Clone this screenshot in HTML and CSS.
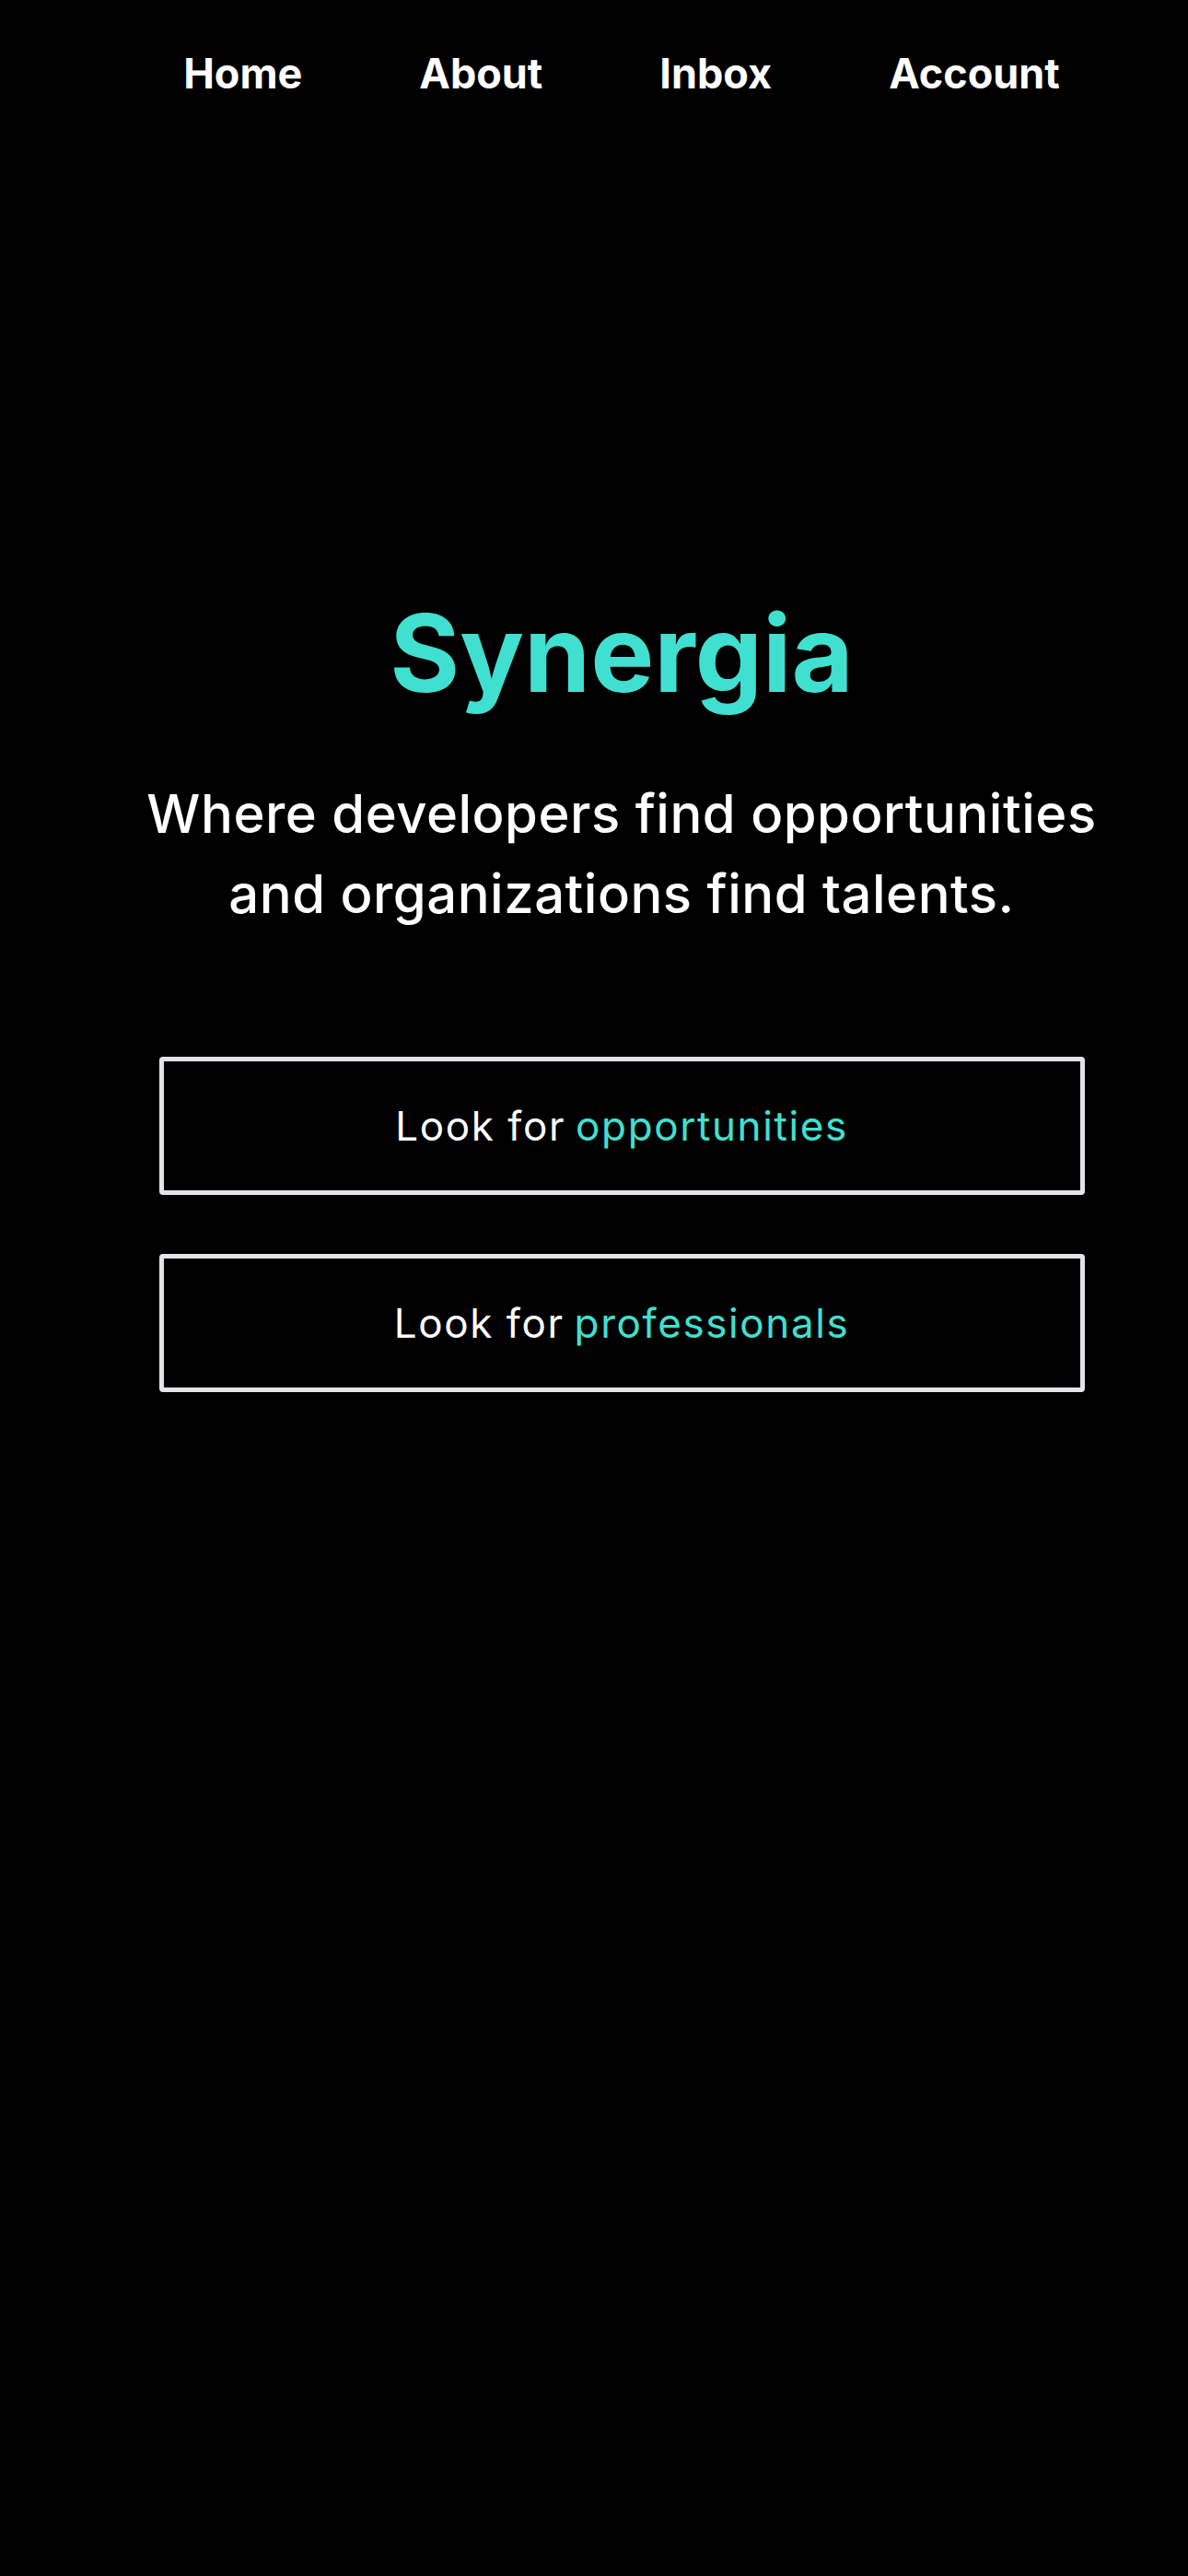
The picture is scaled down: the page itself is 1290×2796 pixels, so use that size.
FILE: index.html
```html
<!DOCTYPE html>
<html lang="en">
<head>
<meta charset="utf-8">
<title>Synergia</title>
<link rel="stylesheet" href="styles.css">
</head>
<body>
<div class="page">
  <nav class="nav">
    <a class="nav-link" href="#">Home</a>
    <a class="nav-link" href="#">About</a>
    <a class="nav-link" href="#">Inbox</a>
    <a class="nav-link" href="#">Account</a>
  </nav>
  <main class="hero">
    <h1 class="title">Synergia</h1>
    <p class="subtitle">Where developers find opportunities<br>and organizations find talents.</p>
    <div class="actions">
      <a class="btn" href="#">Look for <span class="accent">opportunities</span></a>
      <a class="btn" href="#">Look for <span class="accent">professionals</span></a>
    </div>
  </main>
</div>
</body>
</html>
```
FILE: styles.css
```css
html, body {
  margin: 0;
  padding: 0;
  background: #000;
}
body {
  min-height: 2796px;
  font-family: Inter, "Noto Sans", sans-serif;
  color: #fff;
}
.page {
  padding-left: 60px;
}
.nav {
  display: flex;
  justify-content: center;
  gap: 127px;
  padding-top: 57px;
}
.nav-link {
  color: #fff;
  text-decoration: none;
  font-weight: 700;
  font-size: 45px;
  line-height: 46px;
}
.hero {
  display: flex;
  flex-direction: column;
  align-items: center;
  padding-top: 548px;
}
.title {
  margin: 0;
  font-size: 116px;
  line-height: 116px;
  font-weight: 700;
  color: #40e0d0;
}
.subtitle {
  margin: 73px 0 0;
  font-size: 58px;
  line-height: 87px;
  font-weight: 500;
  letter-spacing: 0.5px;
  text-align: center;
}
.actions {
  margin-top: 133px;
  display: flex;
  flex-direction: column;
  gap: 64px;
}
.btn {
  box-sizing: border-box;
  width: 1005px;
  height: 150px;
  border: 5px solid #e3e3e8;
  border-radius: 4px;
  display: flex;
  align-items: center;
  justify-content: center;
  color: #fff;
  text-decoration: none;
  font-size: 44px;
  font-weight: 400;
  letter-spacing: 1.6px;
}
.accent {
  color: #40e0d0;
  margin-left: 0.25em;
}
```
